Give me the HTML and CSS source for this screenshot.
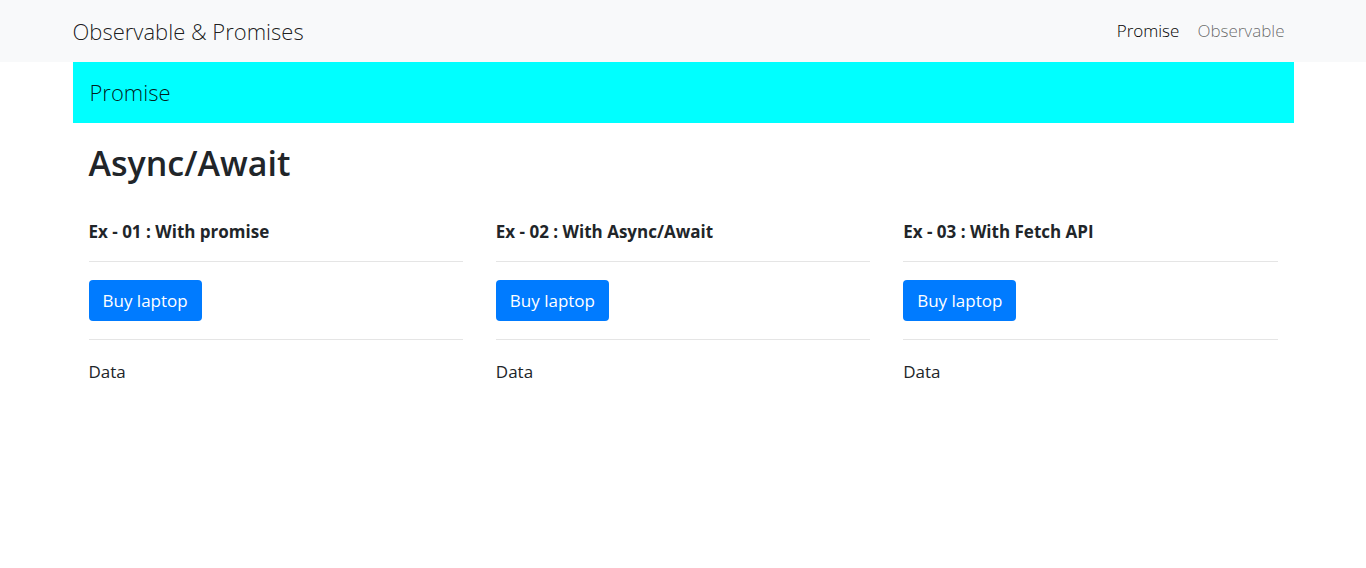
FILE: index.html
```html
<!DOCTYPE html>
<html lang="en">
<head>
<meta charset="utf-8">
<meta name="viewport" content="width=device-width, initial-scale=1">
<title>Observable &amp; Promises</title>
<link rel="stylesheet" href="styles.css">
</head>
<body>
<header class="navbar">
  <nav class="container navbar-inner">
    <a class="brand" href="#">Observable &amp; Promises</a>
    <div class="nav-links">
      <a class="nav-link active" href="#promise">Promise</a>
      <a class="nav-link" href="#observable">Observable</a>
    </div>
  </nav>
</header>
<main class="container">
  <div class="banner"><a class="banner-title" href="#promise">Promise</a></div>
  <div class="content">
    <h2 class="title">Async/Await</h2>
    <div class="examples">
      <section class="example">
        <strong class="example-title">Ex - 01 : With promise</strong>
        <hr class="rule">
        <button class="btn" type="button">Buy laptop</button>
        <hr class="rule">
        <p class="data">Data</p>
      </section>
      <section class="example">
        <strong class="example-title">Ex - 02 : With Async/Await</strong>
        <hr class="rule">
        <button class="btn" type="button">Buy laptop</button>
        <hr class="rule">
        <p class="data">Data</p>
      </section>
      <section class="example">
        <strong class="example-title">Ex - 03 : With Fetch API</strong>
        <hr class="rule">
        <button class="btn" type="button">Buy laptop</button>
        <hr class="rule">
        <p class="data">Data</p>
      </section>
    </div>
  </div>
</main>
</body>
</html>
```
FILE: styles.css
```css
* {
  box-sizing: border-box;
}

body {
  margin: 0;
  background: #fff;
  color: #212529;
  font-family: "Segoe UI", "Open Sans", "Noto Sans", sans-serif;
  font-size: 17px;
  line-height: 26px;
}

.container {
  width: 100%;
  max-width: 1221px;
  margin: 0 auto;
}

.navbar {
  background: #f8f9fa;
}

.navbar-inner {
  display: flex;
  align-items: center;
  justify-content: space-between;
  min-height: 62px;
}

.brand,
.banner-title {
  color: rgba(0, 0, 0, 0.9);
  font-size: 22px;
  font-weight: 300;
  line-height: 33px;
  text-decoration: none;
}

.nav-links {
  display: flex;
  gap: 18px;
  padding-right: 9px;
}

.nav-link {
  color: rgba(0, 0, 0, 0.6);
  font-weight: 300;
  line-height: 28px;
  text-decoration: none;
}

.nav-link.active {
  color: #000;
}

.banner {
  padding: 14px 17px;
  background: #00ffff;
}

.content {
  padding: 19px 16px;
}

.title {
  margin: 0 0 36px;
  font-size: 34px;
  font-weight: 600;
  line-height: 42px;
}

.examples {
  display: grid;
  grid-template-columns: repeat(3, 1fr);
  gap: 33px;
}

.example-title {
  display: block;
  font-weight: 700;
  line-height: 23px;
}

.rule {
  height: 1px;
  margin: 18px 0;
  border: 0;
  background: #e5e5e5;
}

.btn {
  display: block;
  height: 41px;
  padding: 0 14px;
  border: 0;
  border-radius: 4px;
  background: #007bff;
  color: #fff;
  font: inherit;
  cursor: pointer;
}

.data {
  margin: 0;
  line-height: 28px;
}
```
